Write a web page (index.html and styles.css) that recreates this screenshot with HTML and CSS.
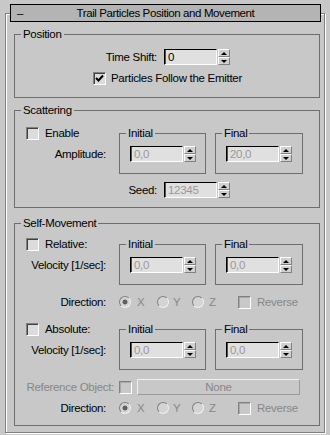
FILE: index.html
```html
<!DOCTYPE html>
<html lang="en">
<head>
    <meta charset="UTF-8">
    <title>Trail Particles Position and Movement</title>
    <link rel="stylesheet" href="styles.css">
</head>
<body>
    <fieldset class="panel">
        <legend class="title"><span class="minus">–</span><span class="title-text">Trail Particles Position and Movement</span><span></span></legend>

        <fieldset class="group pos">
            <legend>Position</legend>
            <div class="row shift">
                <span class="lbl wide">Time Shift:</span>
                <span class="edit">0</span><span class="spin"><i class="up"></i><i class="down"></i></span>
            </div>
            <div class="row follow">
                <span class="chk"><svg width="11" height="11" viewBox="0 0 11 11"><polyline points="2,5 4.5,7.5 9,2.5" fill="none" stroke="#000" stroke-width="2"/></svg></span>
                <span class="chk-text">Particles Follow the Emitter</span>
            </div>
        </fieldset>

        <fieldset class="group scatter">
            <legend>Scattering</legend>
            <div class="block">
                <div class="left">
                    <div class="chk-row"><span class="chk"></span><span class="chk-label">Enable</span></div>
                    <div class="side">Amplitude:</div>
                </div>
                <fieldset class="sub">
                    <legend>Initial</legend>
                    <div class="row"><span class="edit dis">0,0</span><span class="spin"><i class="up"></i><i class="down"></i></span></div>
                </fieldset>
                <fieldset class="sub final">
                    <legend>Final</legend>
                    <div class="row"><span class="edit dis">20,0</span><span class="spin"><i class="up"></i><i class="down"></i></span></div>
                </fieldset>
            </div>
            <div class="row seed">
                <span class="lbl wide">Seed:</span>
                <span class="edit dis">12345</span><span class="spin"><i class="up"></i><i class="down"></i></span>
            </div>
        </fieldset>

        <fieldset class="group self">
            <legend>Self-Movement</legend>
            <div class="block first">
                <div class="left">
                    <div class="chk-row"><span class="chk"></span><span class="chk-label">Relative:</span></div>
                    <div class="side">Velocity [1/sec]:</div>
                </div>
                <fieldset class="sub">
                    <legend>Initial</legend>
                    <div class="row"><span class="edit dis">0,0</span><span class="spin"><i class="up"></i><i class="down"></i></span></div>
                </fieldset>
                <fieldset class="sub final">
                    <legend>Final</legend>
                    <div class="row"><span class="edit dis">0,0</span><span class="spin"><i class="up"></i><i class="down"></i></span></div>
                </fieldset>
            </div>
            <div class="row dir">
                <span class="lbl">Direction:</span>
                <span class="opt x"><span class="rad on"></span><span class="off">X</span></span>
                <span class="opt y"><span class="rad"></span><span class="off">Y</span></span>
                <span class="opt z"><span class="rad"></span><span class="off">Z</span></span>
                <span class="opt"><span class="chk dis"></span><span class="off">Reverse</span></span>
            </div>

            <div class="block second">
                <div class="left">
                    <div class="chk-row"><span class="chk"></span><span class="chk-label">Absolute:</span></div>
                    <div class="side">Velocity [1/sec]:</div>
                </div>
                <fieldset class="sub">
                    <legend>Initial</legend>
                    <div class="row"><span class="edit dis">0,0</span><span class="spin"><i class="up"></i><i class="down"></i></span></div>
                </fieldset>
                <fieldset class="sub final">
                    <legend>Final</legend>
                    <div class="row"><span class="edit dis">0,0</span><span class="spin"><i class="up"></i><i class="down"></i></span></div>
                </fieldset>
            </div>
            <div class="row ref">
                <span class="lbl ref-lbl off">Reference Object:</span>
                <span class="chk dis"></span>
                <span class="btn">None</span>
            </div>
            <div class="row dir last">
                <span class="lbl">Direction:</span>
                <span class="opt x"><span class="rad on"></span><span class="off">X</span></span>
                <span class="opt y"><span class="rad"></span><span class="off">Y</span></span>
                <span class="opt z"><span class="rad"></span><span class="off">Z</span></span>
                <span class="opt"><span class="chk dis"></span><span class="off">Reverse</span></span>
            </div>
        </fieldset>
    </fieldset>
</body>
</html>
```

FILE: styles.css
```css
* {
    box-sizing: border-box;
}
body {
    margin: 0;
    width: 330px;
    height: 435px;
    overflow: hidden;
    background: #c8c8c8;
    color: #000;
    font-family: "Liberation Sans", Arial, sans-serif;
    font-size: 11.5px;
    letter-spacing: -0.3px;
    line-height: 13px;
}
fieldset {
    margin: 0;
    padding: 0;
    min-width: 0;
}
legend {
    margin-left: 6px;
    padding: 0 2px;
    line-height: 13px;
}

/* rollout frame */
.panel {
    margin: 4px 0 0 5px;
    width: 320px;
    padding: 0 4px 6px 4px;
    border: 1px solid #808080;
    box-shadow: inset 1px 1px 0 #fff, 1px 1px 0 #fff;
}
.title {
    margin: 0;
    padding: 0;
    width: 311px;
    height: 18px;
    border: 1px solid #000;
    background: #b4b4b4;
    display: grid;
    grid-template-columns: 20px 1fr 20px;
    align-items: center;
    line-height: 16px;
    letter-spacing: -0.4px;
}
.minus {
    padding-left: 6px;
}
.title-text {
    text-align: center;
}

/* group boxes */
.group {
    margin-left: 4px;
    border: 1px solid #6e6e6e;
}
.pos {
    margin-top: 6px;
    padding-bottom: 12px;
}
.scatter {
    margin-top: 6px;
    padding-bottom: 9px;
}
.self {
    margin-top: 9px;
    padding-bottom: 9px;
}
.sub {
    width: 87px;
    border: 1px solid #6e6e6e;
    padding-bottom: 11px;
}
.sub.final {
    width: 88px;
    margin-left: 9px;
}
.sub .row {
    margin: 6px 0 0 10px;
}

/* rows */
.row {
    display: flex;
    align-items: center;
    height: 16px;
}
.lbl {
    text-align: right;
    width: 91px;
    margin-right: 13px;
    white-space: nowrap;
}
.lbl.wide {
    width: 142px;
    margin-right: 7px;
}
.shift {
    margin-top: 8px;
}
.follow {
    margin-top: 7px;
    height: 13px;
    padding-left: 78px;
}
.chk-text {
    margin-left: 5px;
}
.block {
    display: flex;
    align-items: flex-start;
    margin-top: 10px;
}
.block.first {
    margin-top: 8px;
}
.block.second {
    margin-top: 13px;
}
.left {
    width: 104px;
}
.chk-row {
    display: flex;
    align-items: center;
    height: 13px;
    padding-left: 11px;
}
.chk-label {
    margin-left: 6px;
}
.side {
    margin-top: 6px;
    height: 16px;
    line-height: 16px;
    text-align: right;
    padding-right: 13px;
    white-space: nowrap;
}
.seed {
    margin-top: 8px;
}
.dir {
    margin-top: 9px;
}
.dir.last {
    margin-top: 5px;
}
.ref {
    margin-top: 9px;
}
.ref-lbl {
    width: 99px;
    margin-right: 5px;
}
.ref .chk {
    margin-right: 5px;
}

/* controls */
.edit {
    width: 53px;
    height: 16px;
    padding-left: 3px;
    line-height: 14px;
    background: #e0e0e0;
    border: 1px solid;
    border-color: #000 #fff #fff #000;
    box-shadow: inset 1px 0 0 #505050;
}
.edit.dis {
    color: #999;
}
.spin {
    width: 12px;
    height: 16px;
    margin-left: 1px;
    display: flex;
    flex-direction: column;
}
.spin i {
    flex: 1;
    display: flex;
    align-items: center;
    justify-content: center;
    border: 1px solid;
    border-color: #fff #808080 #808080 #fff;
    background: #d0d0d0;
}
.spin i::after {
    content: "";
    width: 0;
    height: 0;
    border-left: 3px solid transparent;
    border-right: 3px solid transparent;
}
.spin .up::after {
    border-bottom: 3px solid #000;
}
.spin .down::after {
    border-top: 3px solid #000;
}
.chk {
    flex: none;
    width: 13px;
    height: 13px;
    border: 1px solid;
    border-color: #808080 #fff #fff #808080;
    box-shadow: inset 1px 1px 0 #404040;
    background: #dcdcdc;
}
.chk svg {
    display: block;
}
.chk.dis {
    background: #c8c8c8;
    box-shadow: inset 1px 1px 0 #a8a8a8;
}
.opt {
    display: flex;
    align-items: center;
}
.opt .off {
    margin-left: 6px;
}
.opt.x {
    width: 38px;
}
.opt.y {
    width: 35px;
}
.opt.y .off {
    margin-left: 4px;
}
.opt.z {
    width: 46px;
}
.opt.z .off {
    margin-left: 5px;
}
.rad {
    flex: none;
    width: 12px;
    height: 12px;
    border-radius: 50%;
    border: 1px solid;
    border-color: #808080 #f0f0f0 #f0f0f0 #808080;
    background: #d4d4d4;
}
.rad.on {
    background: radial-gradient(circle, #606060 0 2.2px, #d4d4d4 2.8px);
}
.off {
    color: #878787;
}
.btn {
    width: 163px;
    height: 16px;
    line-height: 14px;
    text-align: center;
    color: #878787;
    border: 1px solid;
    border-color: #f0f0f0 #9a9a9a #9a9a9a #f0f0f0;
}
```
